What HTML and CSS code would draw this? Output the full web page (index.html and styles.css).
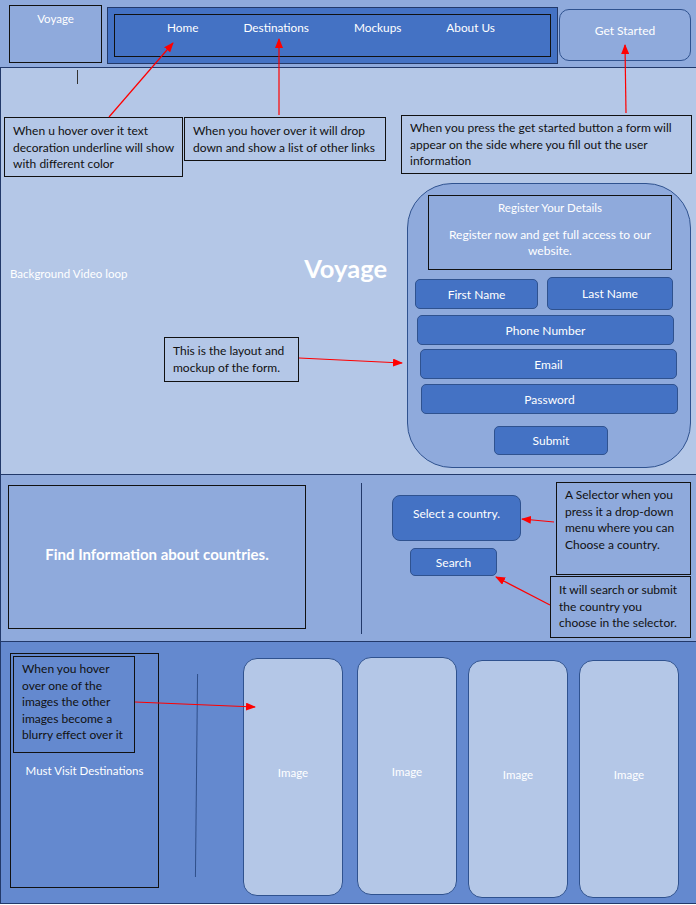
FILE: index.html
```html
<!DOCTYPE html>
<html lang="en">
<head>
  <meta charset="UTF-8" />
  <meta name="viewport" content="width=device-width, initial-scale=1.0"/>
  <title>Voyage Mockup</title>
  <link rel="stylesheet" href="styles.css">
</head>
<body>
  <div class="page">
    <header class="topbar">
      <div class="brand">Voyage</div>
      <nav class="nav">
        <div class="nav-inner">
          <a href="#">Home</a>
          <a href="#">Destinations</a>
          <a href="#">Mockups</a>
          <a href="#">About Us</a>
        </div>
      </nav>
      <div class="cta">Get Started</div>
    </header>

    <section class="hero">
      <span class="tick"></span>
      <div class="hero-copy">
        <span class="video-label">Background Video loop</span>
        <h1 class="title">Voyage</h1>
      </div>
      <form class="signup">
        <div class="signup-head">
          <div class="signup-title">Register Your Details</div>
          <div class="signup-sub">Register now and get full access to our<br>website.</div>
        </div>
        <div class="name-row">
          <div class="field first">First Name</div>
          <div class="field last">Last Name</div>
        </div>
        <div class="field phone">Phone Number</div>
        <div class="field email">Email</div>
        <div class="field password">Password</div>
        <div class="field submit">Submit</div>
      </form>
    </section>

    <section class="countries">
      <div class="info-box">Find Information about countries.</div>
      <div class="divider"></div>
      <div class="picker">
        <div class="select">Select a country.</div>
        <div class="search">Search</div>
      </div>
    </section>

    <section class="destinations">
      <div class="dest-box">Must Visit Destinations</div>
      <div class="dest-line"></div>
      <div class="card c1">Image</div>
      <div class="card c2">Image</div>
      <div class="card c3">Image</div>
      <div class="card c4">Image</div>
    </section>

    <!-- annotations over the mockup -->
    <div class="note n1">When u hover over it text<br>decoration underline will show<br>with different color</div>
    <div class="note n2">When you hover over it will drop<br>down and show a list of other links</div>
    <div class="note n3">When you press the get started button a form will<br>appear on the side where you fill out the user<br>information</div>
    <div class="note n4">This is the layout and<br>mockup of the form.</div>
    <div class="note n5">A Selector when you<br>press it a drop-down<br>menu where you can<br>Choose a country.</div>
    <div class="note n6">It will search or submit<br>the country you<br>choose in the selector.</div>
    <div class="note n7">When you hover<br>over one of the<br>images the other<br>images become a<br>blurry effect over it</div>

    <svg class="arrows" width="696" height="905" viewBox="0 0 696 905">
      <defs>
        <marker id="head" markerWidth="10" markerHeight="8" refX="9" refY="4" orient="auto" markerUnits="userSpaceOnUse">
          <path d="M0,0 L10,4 L0,8 Z" fill="#ff0000"/>
        </marker>
      </defs>
      <g stroke="#ff0000" stroke-width="1.2" fill="none" marker-end="url(#head)">
        <line x1="109" y1="117" x2="173" y2="43"/>
        <line x1="279" y1="115" x2="279" y2="39"/>
        <line x1="626" y1="113" x2="625" y2="45"/>
        <line x1="299" y1="358" x2="402" y2="363"/>
        <line x1="554" y1="522" x2="522" y2="519"/>
        <line x1="550" y1="605" x2="496" y2="577"/>
        <line x1="135" y1="702" x2="255" y2="707"/>
      </g>
    </svg>
  </div>
</body>
</html>
```

FILE: styles.css
```css
* { box-sizing: border-box; }
body {
  margin: 0;
  font-family: 'Lato', 'Noto Sans', sans-serif;
  background: #fff;
  color: #fff;
}
.page {
  position: relative;
  width: 696px;
  height: 905px;
}
.topbar {
  display: flex;
  align-items: flex-start;
  height: 68px;
  padding: 5px 0 0 9px;
  background: #8faadc;
  border-bottom: 1px solid #22396a;
}
.brand {
  width: 93px;
  height: 58px;
  border: 1px solid #111;
  text-align: center;
  padding-top: 5px;
  font-size: 11.5px;
  line-height: 16px;
}
.nav {
  width: 451px;
  height: 57px;
  margin: 2px 0 0 5px;
  padding: 6px;
  background: #4472c4;
  border: 1px solid #22396a;
}
.nav-inner {
  display: flex;
  gap: 45px;
  height: 43px;
  padding: 5px 0 0 52px;
  border: 1px solid #111;
}
.nav-inner a {
  color: #fff;
  text-decoration: none;
  font-size: 11.8px;
  line-height: 16px;
}
.cta {
  width: 132px;
  height: 52px;
  margin: 4px 0 0 1px;
  padding-top: 13px;
  background: #8faadc;
  border: 1px solid #2f528f;
  border-radius: 10px;
  font-size: 12px;
  line-height: 16px;
  text-align: center;
}

/* hero */
.hero {
  position: relative;
  display: flex;
  height: 407px;
  background: #b4c7e7;
  border-left: 1px solid #22396a;
  border-bottom: 1px solid #22396a;
}
.tick {
  position: absolute;
  left: 76px;
  top: 2px;
  width: 1px;
  height: 14px;
  background: #333;
}
.hero-copy {
  flex: 1;
  display: flex;
  align-items: baseline;
  align-self: flex-start;
  margin-top: 185px;
  padding-left: 9px;
}
.video-label {
  font-size: 11.5px;
}
.title {
  margin: 0 20px 0 auto;
  font-size: 25.5px;
  font-weight: 700;
  line-height: 30px;
}
.signup {
  display: flex;
  flex-direction: column;
  align-items: flex-start;
  width: 284px;
  height: 285px;
  margin: 115px 5px 0 0;
  padding-top: 11px;
  background: #8faadc;
  border: 1px solid #2f528f;
  border-radius: 45px;
}
.signup-head {
  width: 244px;
  height: 75px;
  margin-left: 20px;
  padding-top: 4px;
  border: 1px solid #111;
  text-align: center;
}
.signup-title {
  font-size: 11.5px;
  line-height: 16px;
}
.signup-sub {
  margin-top: 11px;
  font-size: 12px;
  line-height: 16px;
}
.name-row {
  display: flex;
  align-items: flex-start;
  margin-top: 7px;
}
.field {
  display: flex;
  align-items: center;
  justify-content: center;
  width: 257px;
  height: 30px;
  background: #4472c4;
  border: 1px solid #2f528f;
  border-radius: 5px;
  font-size: 12px;
}
.field.first { width: 123px; margin: 2px 0 0 7px; }
.field.last { width: 126px; height: 33px; margin-left: 9px; }
.field.phone { margin: 5px 0 0 9px; }
.field.email { margin: 4px 0 0 12px; }
.field.password { margin: 5px 0 0 13px; }
.field.submit { width: 114px; height: 29px; margin: 12px 0 0 86px; }

/* countries */
.countries {
  display: flex;
  align-items: flex-start;
  height: 167px;
  padding-left: 7px;
  background: #8faadc;
  border-left: 1px solid #22396a;
  border-bottom: 1px solid #22396a;
}
.info-box {
  display: flex;
  align-items: center;
  justify-content: center;
  width: 298px;
  height: 144px;
  margin-top: 10px;
  padding-bottom: 7px;
  border: 1px solid #111;
  font-size: 15px;
  font-weight: 700;
}
.divider {
  width: 1px;
  height: 151px;
  margin: 8px 0 0 55px;
  background: #22396a;
}
.picker {
  display: flex;
  flex-direction: column;
  align-items: flex-start;
  margin: 20px 0 0 30px;
}
.select {
  width: 129px;
  height: 46px;
  padding-top: 10px;
  background: #4472c4;
  border: 1px solid #2f528f;
  border-radius: 8px;
  text-align: center;
  font-size: 12px;
  line-height: 16px;
}
.search {
  display: flex;
  align-items: center;
  justify-content: center;
  width: 87px;
  height: 28px;
  margin: 7px 0 0 18px;
  background: #4472c4;
  border: 1px solid #2f528f;
  border-radius: 5px;
  font-size: 12px;
}

/* destinations */
.destinations {
  display: flex;
  align-items: flex-start;
  height: 262px;
  padding-left: 9px;
  background: #6489cf;
  border-left: 1px solid #22396a;
  border-bottom: 1px solid #22396a;
}
.dest-box {
  width: 149px;
  height: 235px;
  margin-top: 11px;
  padding-top: 109px;
  border: 1px solid #111;
  text-align: center;
  font-size: 11.5px;
  line-height: 16px;
}
.dest-line {
  width: 1px;
  height: 203px;
  margin: 32px 0 0 37px;
  background: #2f4f8a;
  transform: rotate(0.6deg);
}
.card {
  display: flex;
  align-items: center;
  justify-content: center;
  width: 100px;
  height: 238px;
  padding-bottom: 9px;
  background: #b4c7e7;
  border: 1px solid #2f528f;
  border-radius: 14px;
  font-size: 11.5px;
}
.c1 { margin: 16px 0 0 46px; }
.c2 { margin: 15px 0 0 14px; }
.c3 { margin: 18px 0 0 11px; }
.c4 { margin: 18px 0 0 11px; }

/* annotations */
.note {
  position: absolute;
  padding: 4px 8px;
  border: 1px solid #111;
  color: #111;
  font-size: 12px;
  line-height: 16.5px;
  white-space: nowrap;
}
.n1 { left: 4px; top: 117px; width: 179px; height: 60px; padding-top: 5px; }
.n2 { left: 184px; top: 117px; width: 202px; height: 44px; padding-top: 5px; }
.n3 { left: 401px; top: 115px; width: 291px; height: 59px; }
.n4 { left: 164px; top: 337px; width: 135px; height: 45px; padding-top: 5px; }
.n5 { left: 556px; top: 482px; width: 135px; height: 93px; }
.n6 { left: 550px; top: 576px; width: 141px; height: 62px; padding-top: 5px; }
.n7 { left: 13px; top: 656px; width: 122px; height: 97px; }
.arrows {
  position: absolute;
  left: 0;
  top: 0;
  pointer-events: none;
}
```
